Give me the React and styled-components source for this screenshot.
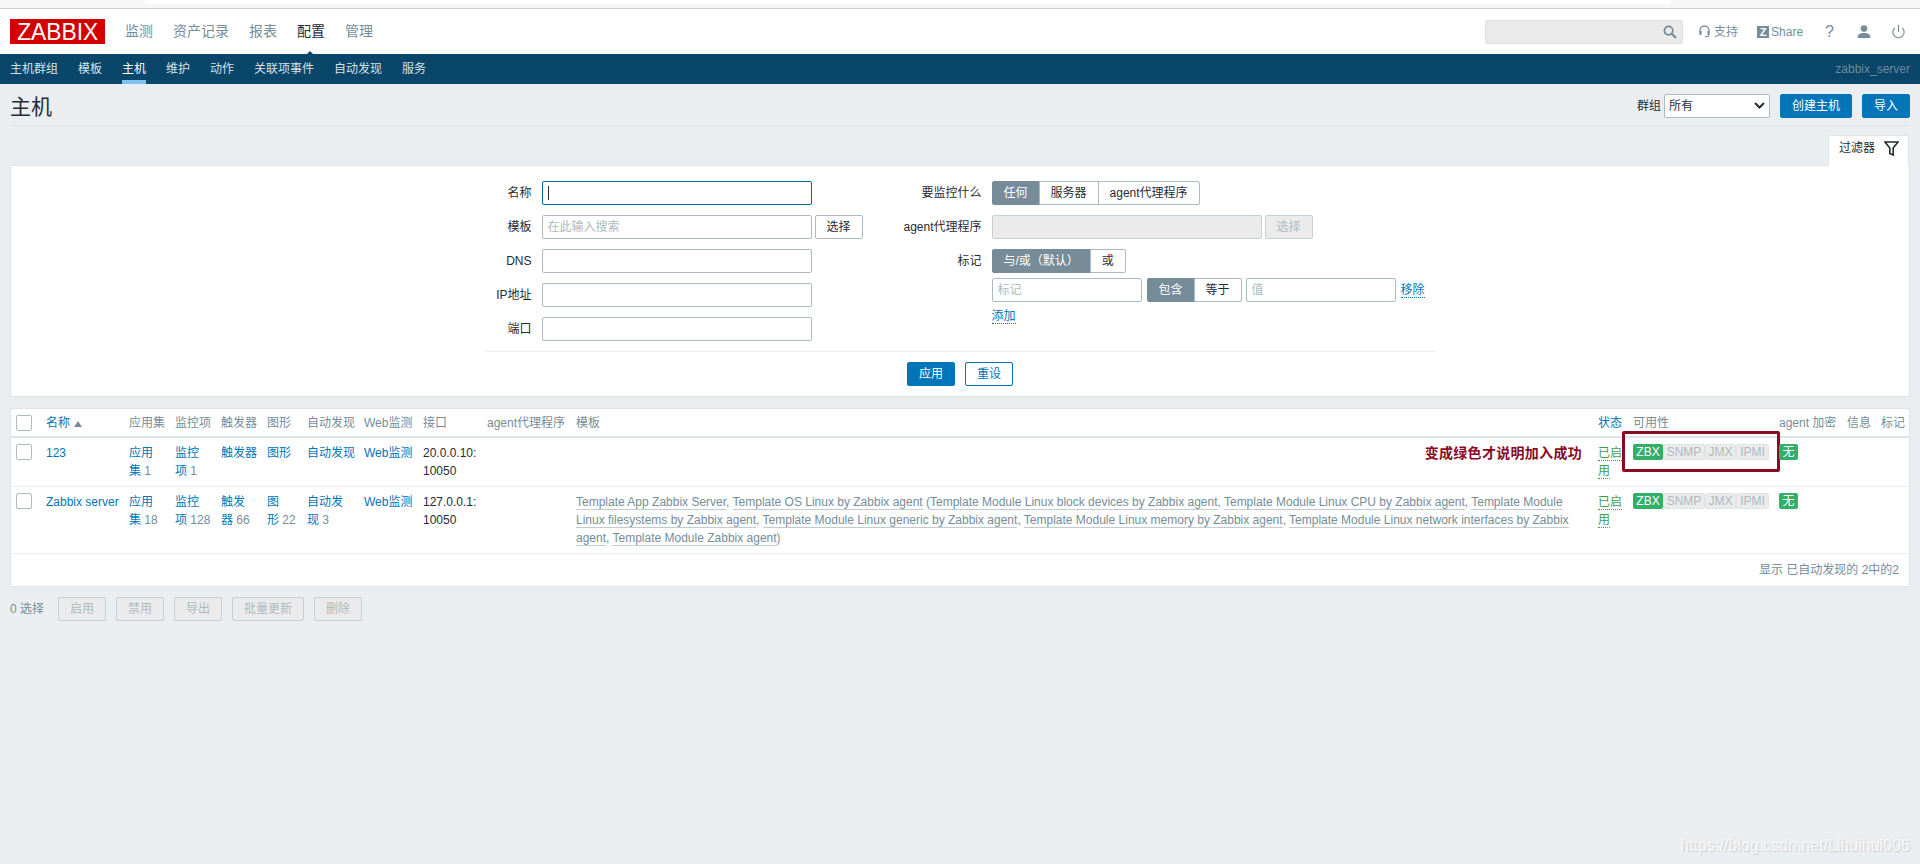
import React from 'react';
import styled, { createGlobalStyle } from 'styled-components';
import { Power } from 'lucide-react';

const COLORS = {
  page: '#ebeef0',
  line: '#dfe4e7',
  text: '#1f2c33',
  muted: '#768d99',
  field: '#acbbc2',
  blue: '#0275b8',
  navy: '#0a466a',
  green: '#34af67',
  disabled: '#ebebeb',
};

const GlobalStyle = createGlobalStyle`
  html, body {
    margin: 0;
    padding: 0;
    background: ${COLORS.page};
  }
  body {
    font-family: "Liberation Sans", "Noto Sans CJK SC", sans-serif;
    font-size: 12px;
    line-height: 14px;
    color: ${COLORS.text};
  }
  * {
    box-sizing: border-box;
  }
`;

const Page = styled.div`
  position: relative;
  height: 864px;
  overflow: hidden;
`;

const BrowserEdge = styled.div`
  height: 9px;
  background: #f6f6f6;
  border-bottom: 1px solid #d2d2d2;
  padding-left: 144px;
`;

const BrowserTab = styled.div`
  width: 1527px;
  height: 4px;
  background: #fff;
  border-radius: 0 0 4px 4px;
`;

const TopBar = styled.header`
  height: 45px;
  background: #fff;
  display: flex;
  align-items: center;
  padding: 0 14px 0 10px;
`;

const Logo = styled.div`
  width: 95px;
  height: 25px;
  background: #d40000;
  color: #fff;
  display: flex;
  align-items: center;
  justify-content: center;
  font-size: 24px;
  span {
    display: block;
    transform: scaleX(0.95);
  }
`;

const MainNav = styled.nav`
  display: flex;
  gap: 20px;
  margin: -1px 0 0 20px;
`;

const MainNavItem = styled.a`
  position: relative;
  font-size: 14px;
  line-height: 18px;
  color: ${(p) => (p.$active ? COLORS.text : COLORS.muted)};
  ${(p) =>
    p.$active &&
    `
    &::after {
      content: '';
      position: absolute;
      left: 5px;
      top: 29px;
      border-left: 8px solid transparent;
      border-right: 8px solid transparent;
      border-bottom: 8px solid ${COLORS.navy};
    }
  `}
`;

const TopTools = styled.div`
  margin-left: auto;
  display: flex;
  align-items: center;
  color: ${COLORS.muted};
`;

const SearchBox = styled.div`
  width: 198px;
  height: 24px;
  background: ${COLORS.disabled};
  border: 1px solid ${COLORS.line};
  border-radius: 2px;
  display: flex;
  align-items: center;
  justify-content: flex-end;
  padding-right: 5px;
  margin-right: 16px;
`;

const ToolLink = styled.a`
  display: flex;
  align-items: center;
  gap: ${(p) => p.$gap || 2}px;
  margin-right: ${(p) => p.$after || 0}px;
  color: ${COLORS.muted};
`;

const ZBadge = styled.span`
  width: 12px;
  height: 12px;
  background: ${COLORS.muted};
  color: #fff;
  font-size: 11px;
  line-height: 12px;
  font-weight: bold;
  text-align: center;
`;

const HelpMark = styled.span`
  font-size: 16px;
  line-height: 18px;
`;

const SubBar = styled.nav`
  height: 30px;
  background: ${COLORS.navy};
  display: flex;
  gap: 20px;
  padding: 0 10px;
`;

const SubItem = styled.a`
  height: 30px;
  line-height: 30px;
  color: ${(p) => (p.$active ? '#fff' : '#d4e1e9')};
  box-shadow: ${(p) => (p.$active ? 'inset 0 -4px 0 #7cc3f0' : 'none')};
`;

const ServerName = styled.span`
  margin-left: auto;
  line-height: 30px;
  color: #6c8a9b;
`;

const TitleBar = styled.div`
  margin: 0 10px;
  height: 42px;
  border-bottom: 1px solid ${COLORS.line};
  display: flex;
  justify-content: space-between;
  align-items: flex-start;
  padding-top: 10px;
`;

const Title = styled.h1`
  margin: 0;
  font-size: 21px;
  line-height: 26px;
  font-weight: normal;
`;

const TitleControls = styled.div`
  display: flex;
  align-items: center;
`;

const GroupLabel = styled.label`
  margin-right: 3px;
`;

const SelectWrap = styled.div`
  position: relative;
  width: 106px;
  height: 24px;
  margin-right: 10px;
  svg {
    position: absolute;
    right: 5px;
    top: 7px;
    pointer-events: none;
  }
`;

const GroupSelect = styled.select`
  appearance: none;
  width: 100%;
  height: 100%;
  border: 1px solid ${COLORS.field};
  border-radius: 2px;
  background: #fff;
  font: inherit;
  color: ${COLORS.text};
  padding: 0 4px;
`;

const Button = styled.button`
  height: 24px;
  padding: 0 11px;
  margin-left: ${(p) => p.$left || 0}px;
  font: inherit;
  border-radius: 2px;
  border: 1px solid ${COLORS.blue};
  background: ${(p) => (p.$outline ? '#fff' : COLORS.blue)};
  color: ${(p) => (p.$outline ? COLORS.blue : '#fff')};
`;

const PlainButton = styled.button`
  height: 24px;
  width: ${(p) => p.$width || 48}px;
  margin-left: ${(p) => p.$left || 0}px;
  padding: 0;
  font: inherit;
  background: ${(p) => (p.$disabled ? COLORS.disabled : '#fff')};
  border: 1px solid ${(p) => (p.$disabled ? '#c5d0d4' : COLORS.field)};
  color: ${(p) => (p.$disabled ? COLORS.field : COLORS.text)};
  border-radius: 2px;
`;

const TabRow = styled.div`
  display: flex;
  justify-content: flex-end;
  margin: 9px 11px -1px 10px;
  position: relative;
  z-index: 1;
`;

const FilterTab = styled.div`
  width: 81px;
  height: 31px;
  background: #fff;
  border: 1px solid ${COLORS.line};
  border-bottom: 0;
  display: flex;
  justify-content: space-between;
  align-items: flex-start;
  padding: 5px 9px 0 10px;
`;

const FilterPanel = styled.section`
  margin: 0 10px;
  height: 232px;
  background: #fff;
  border: 1px solid ${COLORS.line};
  padding-top: 15px;
`;

const FormColumns = styled.div`
  width: 949px;
  margin: 0 auto;
  display: flex;
  height: 160px;
`;

const FormColumn = styled.div`
  width: ${(p) => p.$width}px;
  display: grid;
  grid-template-columns: ${(p) => p.$label}px 1fr;
  column-gap: 10px;
  row-gap: 10px;
  align-content: start;
`;

const FieldLabel = styled.label`
  text-align: right;
  line-height: 24px;
`;

const FieldControls = styled.div`
  display: flex;
  align-items: center;
  gap: 3px;
`;

const CaretField = styled.div`
  position: relative;
  width: 270px;
  height: 24px;
  &::after {
    content: '';
    position: absolute;
    left: 6px;
    top: 5px;
    width: 1px;
    height: 14px;
    background: ${COLORS.text};
  }
`;

const TextField = styled.input`
  width: ${(p) => p.$width || 270}px;
  height: 24px;
  font: inherit;
  padding: 0 5px;
  border: 1px solid ${(p) => (p.$focused ? '#00669f' : '#acbbc2')};
  border-radius: 2px;
  background: ${(p) => (p.disabled ? COLORS.disabled : '#fff')};
  color: ${COLORS.text};
  &:disabled {
    border-color: #c5d0d4;
  }
  &::placeholder {
    color: ${COLORS.field};
    opacity: 1;
  }
`;

const Segments = styled.div`
  display: flex;
`;

const TagSegments = styled(Segments)`
  margin: 0 4px 0 5px;
`;

const Segment = styled.div`
  height: 24px;
  line-height: 22px;
  padding: 0 11px;
  margin-left: -1px;
  border: 1px solid ${(p) => (p.$active ? COLORS.muted : COLORS.field)};
  background: ${(p) => (p.$active ? COLORS.muted : '#fff')};
  color: ${(p) => (p.$active ? '#fff' : COLORS.text)};
  &:first-child {
    margin-left: 0;
    border-radius: 2px 0 0 2px;
  }
  &:last-child {
    border-radius: 0 2px 2px 0;
  }
`;

const TagBlock = styled.div`
  display: flex;
  flex-direction: column;
`;

const TagRow = styled.div`
  display: flex;
  align-items: center;
  margin-top: 5px;
`;

const ActionLink = styled.a`
  width: fit-content;
  color: ${COLORS.blue};
  border-bottom: 1px dotted ${COLORS.blue};
  line-height: 14px;
  margin-left: ${(p) => p.$left || 0}px;
  margin-top: ${(p) => p.$top || 0}px;
`;

const FormDivider = styled.hr`
  width: 949px;
  margin: 10px auto;
  border: 0;
  border-top: 1px solid ${COLORS.page};
`;

const FormActions = styled.div`
  display: flex;
  justify-content: center;
  gap: 10px;
`;

const ListBox = styled.section`
  margin: 11px 10px 0;
  background: #fff;
  border: 1px solid ${COLORS.line};
`;

const HostTable = styled.table`
  width: 1898px;
  table-layout: fixed;
  border-collapse: separate;
  border-spacing: 0;
`;

const HeadCell = styled.th`
  font-weight: normal;
  text-align: left;
  height: 29px;
  padding: 0 0 0 5px;
  line-height: 18px;
  white-space: nowrap;
  color: ${(p) => (p.$sorted ? COLORS.blue : COLORS.muted)};
  border-bottom: 2px solid ${COLORS.line};
`;

const SortArrow = styled.span`
  display: inline-block;
  margin-left: 4px;
  border-left: 4px solid transparent;
  border-right: 4px solid transparent;
  border-bottom: 6px solid ${COLORS.muted};
`;

const Cell = styled.td`
  vertical-align: top;
  padding: 6px 0 6px 5px;
  line-height: 18px;
  white-space: nowrap;
  border-bottom: 1px solid ${COLORS.page};
  position: relative;
`;

const BlueLink = styled.a`
  color: ${COLORS.blue};
`;

const Count = styled.span`
  color: ${COLORS.muted};
`;

const TemplateLink = styled.a`
  color: ${COLORS.muted};
  border-bottom: 1px solid rgba(118, 141, 153, 0.45);
`;

const StatusLink = styled.a`
  color: #429e47;
  border-bottom: 1px dotted #429e47;
`;

const Line = styled.div`
  height: 18px;
`;

const Checkbox = styled.span`
  display: block;
  width: 16px;
  height: 16px;
  border: 1px solid ${COLORS.field};
  border-radius: 2px;
  background: #fff;
`;

const Annotation = styled.div`
  text-align: right;
  padding-right: 11px;
  font-size: 14px;
  font-weight: bold;
  letter-spacing: 0.3px;
  color: #8a0a24;
`;

const Badges = styled.div`
  display: flex;
  height: 16px;
`;

const Badge = styled.span`
  width: ${(p) => p.$width}px;
  height: 16px;
  text-align: center;
  font-size: 12px;
  background: ${(p) => (p.$on ? COLORS.green : COLORS.disabled)};
  color: ${(p) => (p.$on ? '#fff' : COLORS.field)};
  border: ${(p) => (p.$on ? '0' : `1px solid ${COLORS.line}`)};
  line-height: ${(p) => (p.$on ? 16 : 14)}px;
  border-radius: 2px;
`;

const RedBox = styled.div`
  position: absolute;
  left: -6px;
  top: -7px;
  width: 158px;
  height: 41px;
  border: 3px solid #8a0a24;
  border-radius: 2px;
`;

const TableFooter = styled.div`
  height: 32px;
  line-height: 32px;
  text-align: right;
  padding-right: 10px;
  color: ${COLORS.muted};
`;

const BulkBar = styled.div`
  display: flex;
  align-items: center;
  margin: 10px 10px 0;
`;

const Selected = styled.span`
  width: 48px;
  color: ${COLORS.muted};
`;

const Watermark = styled.div`
  position: absolute;
  right: 10px;
  bottom: 9px;
  font-size: 16px;
  line-height: 18px;
  color: rgba(255, 255, 255, 0.75);
  text-shadow: 1px 1px 1px rgba(0, 0, 0, 0.14);
`;

const mainNav = ['监测', '资产记录', '报表', '配置', '管理'];
const subNav = ['主机群组', '模板', '主机', '维护', '动作', '关联项事件', '自动发现', '服务'];

const colWidths = [30, 83, 46, 46, 46, 40, 57, 59, 64, 89, 1022, 35, 146, 68, 34, 33];
const headers = ['应用集', '监控项', '触发器', '图形', '自动发现', 'Web监测', '接口', 'agent代理程序', '模板'];

const hosts = [
  {
    name: '123',
    links: [
      [['应用'], ['集', ' 1']],
      [['监控'], ['项', ' 1']],
      [['触发器']],
      [['图形']],
      [['自动发现']],
      [['Web监测']],
    ],
    iface: ['20.0.0.10:', '10050'],
  },
  {
    name: 'Zabbix server',
    links: [
      [['应用'], ['集', ' 18']],
      [['监控'], ['项', ' 128']],
      [['触发'], ['器', ' 66']],
      [['图'], ['形', ' 22']],
      [['自动发'], ['现', ' 3']],
      [['Web监测']],
    ],
    iface: ['127.0.0.1:', '10050'],
    // odd entries are links, even ones the plain text between them
    templates: [
      ['', 'Template App Zabbix Server', ', ', 'Template OS Linux by Zabbix agent', ' (', 'Template Module Linux block devices by Zabbix agent', ', ', 'Template Module Linux CPU by Zabbix agent', ', ', 'Template Module'],
      ['', 'Linux filesystems by Zabbix agent', ', ', 'Template Module Linux generic by Zabbix agent', ', ', 'Template Module Linux memory by Zabbix agent', ', ', 'Template Module Linux network interfaces by Zabbix'],
      ['', 'agent', ', ', 'Template Module Zabbix agent', ')'],
    ],
  },
];

const SearchIcon = () => (
  <svg width="14" height="14" viewBox="0 0 14 14" fill="none" stroke="#768d99" strokeWidth="1.8">
    <circle cx="5.6" cy="5.6" r="4.2" />
    <path d="M8.8 8.8l4.2 4.2" strokeWidth="2.2" />
  </svg>
);

const HeadsetIcon = () => (
  <svg width="11" height="13" viewBox="0 0 11 13" fill="none" stroke="#768d99">
    <path d="M1 8V5.5a4.5 4.5 0 0 1 9 0V8" strokeWidth="1.3" />
    <path d="M0.5 6h2v4h-2zM8.5 6h2v4h-2z" fill="#768d99" stroke="none" />
    <path d="M9.5 10v1.5H6" strokeWidth="1" />
  </svg>
);

const UserIcon = () => (
  <svg width="14" height="14" viewBox="0 0 14 14" fill="#768d99">
    <circle cx="7" cy="3.6" r="3.3" />
    <path d="M0.8 13v-1.6c0-2 2.4-3.4 6.2-3.4s6.2 1.4 6.2 3.4V13z" />
  </svg>
);

const FunnelIcon = () => (
  <svg width="15" height="15" viewBox="0 0 15 15" fill="none" stroke="#1f2c33" strokeWidth="1.6">
    <path d="M1 1h13L9.2 7v7L5.8 12.4V7z" />
  </svg>
);

const ChevronIcon = () => (
  <svg width="11" height="9" viewBox="0 0 11 9" fill="none" stroke="#1f2c33" strokeWidth="2">
    <path d="M1 2l4.5 4.5L10 2" />
  </svg>
);

const Lines = ({ rows }) =>
  rows.map(([text, count]) => (
    <Line key={text}>
      <BlueLink>{text}</BlueLink>
      {count && <Count>{count}</Count>}
    </Line>
  ));

const Availability = ({ boxed }) => (
  <Cell>
    {boxed && <RedBox />}
    <Badges>
      <Badge $on $width={30}>ZBX</Badge>
      <Badge $width={42}>SNMP</Badge>
      <Badge $width={31}>JMX</Badge>
      <Badge $width={33}>IPMI</Badge>
    </Badges>
  </Cell>
);

const App = () => (
  <Page>
    <GlobalStyle />
    <BrowserEdge>
      <BrowserTab />
    </BrowserEdge>
    <TopBar>
      <Logo>
        <span>ZABBIX</span>
      </Logo>
      <MainNav>
        {mainNav.map((item) => (
          <MainNavItem key={item} $active={item === '配置'}>
            {item}
          </MainNavItem>
        ))}
      </MainNav>
      <TopTools>
        <SearchBox>
          <SearchIcon />
        </SearchBox>
        <ToolLink $gap={4} $after={19}>
          <HeadsetIcon />
          支持
        </ToolLink>
        <ToolLink $after={22}>
          <ZBadge>Z</ZBadge>
          Share
        </ToolLink>
        <ToolLink $after={23}>
          <HelpMark>?</HelpMark>
        </ToolLink>
        <ToolLink $after={20}>
          <UserIcon />
        </ToolLink>
        <ToolLink>
          <Power size={15} strokeWidth={1.8} />
        </ToolLink>
      </TopTools>
    </TopBar>
    <SubBar>
      {subNav.map((item) => (
        <SubItem key={item} $active={item === '主机'}>
          {item}
        </SubItem>
      ))}
      <ServerName>zabbix_server</ServerName>
    </SubBar>
    <TitleBar>
      <Title>主机</Title>
      <TitleControls>
        <GroupLabel>群组</GroupLabel>
        <SelectWrap>
          <GroupSelect defaultValue="all">
            <option value="all">所有</option>
          </GroupSelect>
          <ChevronIcon />
        </SelectWrap>
        <Button>创建主机</Button>
        <Button $left={10}>导入</Button>
      </TitleControls>
    </TitleBar>
    <TabRow>
      <FilterTab>
        过滤器
        <FunnelIcon />
      </FilterTab>
    </TabRow>
    <FilterPanel>
      <FormColumns>
        <FormColumn $width={396} $label={46}>
          <FieldLabel>名称</FieldLabel>
          <CaretField>
            <TextField $focused />
          </CaretField>
          <FieldLabel>模板</FieldLabel>
          <FieldControls>
            <TextField placeholder="在此输入搜索" />
            <PlainButton>选择</PlainButton>
          </FieldControls>
          <FieldLabel>DNS</FieldLabel>
          <TextField />
          <FieldLabel>IP地址</FieldLabel>
          <TextField />
          <FieldLabel>端口</FieldLabel>
          <TextField />
        </FormColumn>
        <FormColumn $width={553} $label={100}>
          <FieldLabel>要监控什么</FieldLabel>
          <Segments>
            <Segment $active>任何</Segment>
            <Segment>服务器</Segment>
            <Segment>agent代理程序</Segment>
          </Segments>
          <FieldLabel>agent代理程序</FieldLabel>
          <FieldControls>
            <TextField disabled />
            <PlainButton $disabled>选择</PlainButton>
          </FieldControls>
          <FieldLabel>标记</FieldLabel>
          <TagBlock>
            <Segments>
              <Segment $active>与/或（默认）</Segment>
              <Segment>或</Segment>
            </Segments>
            <TagRow>
              <TextField $width={150} placeholder="标记" />
              <TagSegments>
                <Segment $active>包含</Segment>
                <Segment>等于</Segment>
              </TagSegments>
              <TextField $width={150} placeholder="值" />
              <ActionLink $left={5}>移除</ActionLink>
            </TagRow>
            <ActionLink $top={7}>添加</ActionLink>
          </TagBlock>
        </FormColumn>
      </FormColumns>
      <FormDivider />
      <FormActions>
        <Button>应用</Button>
        <Button $outline>重设</Button>
      </FormActions>
    </FilterPanel>
    <ListBox>
      <HostTable>
        <colgroup>
          {colWidths.map((width, i) => (
            <col key={i} width={width} />
          ))}
        </colgroup>
        <thead>
          <tr>
            <HeadCell>
              <Checkbox />
            </HeadCell>
            <HeadCell $sorted>
              名称
              <SortArrow />
            </HeadCell>
            {headers.map((label) => (
              <HeadCell key={label}>{label}</HeadCell>
            ))}
            <HeadCell $sorted>状态</HeadCell>
            <HeadCell>可用性</HeadCell>
            <HeadCell>agent 加密</HeadCell>
            <HeadCell>信息</HeadCell>
            <HeadCell>标记</HeadCell>
          </tr>
        </thead>
        <tbody>
          {hosts.map((host, index) => (
            <tr key={host.name}>
              <Cell>
                <Checkbox />
              </Cell>
              <Cell>
                <BlueLink>{host.name}</BlueLink>
              </Cell>
              {host.links.map((rows, i) => (
                <Cell key={i}>
                  <Lines rows={rows} />
                </Cell>
              ))}
              <Cell>
                {host.iface.map((part) => (
                  <Line key={part}>{part}</Line>
                ))}
              </Cell>
              <Cell />
              <Cell>
                {host.templates ? (
                  host.templates.map((parts, i) => (
                    <Line key={i}>
                      {parts.map((part, j) =>
                        j % 2 ? <TemplateLink key={j}>{part}</TemplateLink> : <Count key={j}>{part}</Count>
                      )}
                    </Line>
                  ))
                ) : (
                  <Annotation>变成绿色才说明加入成功</Annotation>
                )}
              </Cell>
              <Cell>
                <Line>
                  <StatusLink>已启</StatusLink>
                </Line>
                <Line>
                  <StatusLink>用</StatusLink>
                </Line>
              </Cell>
              <Availability boxed={index === 0} />
              <Cell>
                <Badges>
                  <Badge $on $width={19}>无</Badge>
                </Badges>
              </Cell>
              <Cell />
              <Cell />
            </tr>
          ))}
        </tbody>
      </HostTable>
      <TableFooter>显示 已自动发现的 2中的2</TableFooter>
    </ListBox>
    <BulkBar>
      <Selected>0 选择</Selected>
      <PlainButton $disabled>启用</PlainButton>
      <PlainButton $disabled $left={10}>禁用</PlainButton>
      <PlainButton $disabled $left={10}>导出</PlainButton>
      <PlainButton $disabled $left={10} $width={72}>批量更新</PlainButton>
      <PlainButton $disabled $left={10}>删除</PlainButton>
    </BulkBar>
    <Watermark>https://blog.csdn.net/Lihuihui006</Watermark>
  </Page>
);

export default App;
